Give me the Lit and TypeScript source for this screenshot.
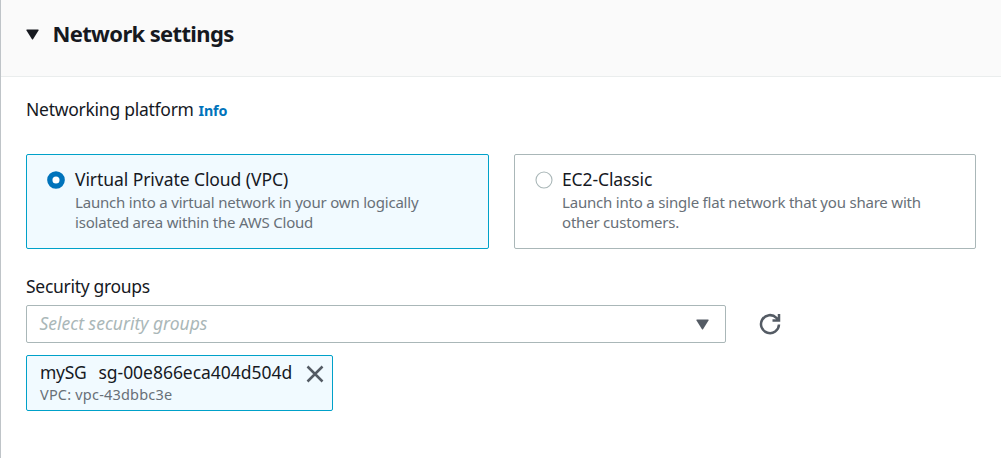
import { LitElement, html, css } from "lit";
import { customElement, property, state } from "lit/decorators.js";
import { classMap } from "lit/directives/class-map.js";

@customElement("platform-tile")
class PlatformTile extends LitElement {
  @property() heading = "";
  @property({ type: Array }) lines: string[] = [];
  @property({ type: Boolean }) selected = false;

  static styles = css`
    :host { display: block; }
    .tile {
      box-sizing: border-box;
      height: 95px;
      padding: 14px 20px;
      border: 1px solid #aab7b8;
      border-radius: 2px;
      background: #fff;
      display: flex;
      gap: 10px;
      cursor: pointer;
      white-space: nowrap;
    }
    .tile.selected { border-color: #00a1c9; background: #f1faff; }
    .tile:not(.selected) { padding-left: 19.5px; gap: 9.5px; }
    .radio { flex: none; width: 18px; height: 18px; margin-top: 1.5px; }
    .off { fill: #fff; stroke: #aab7b8; stroke-width: 1.1; }
    .ring { fill: #fff; stroke: #0073bb; stroke-width: 5.3; }
    .heading { font-size: 17.5px; line-height: 20px; color: #16191f; letter-spacing: -0.12px; }
    .selected .heading { letter-spacing: -0.07px; }
    .desc { margin-top: 3px; font-size: 15px; line-height: 20px; color: #687078; letter-spacing: -0.2px; }
  `;

  render() {
    return html`
      <div class=${classMap({ tile: true, selected: this.selected })}>
        <svg class="radio" viewBox="0 0 18 18">
          <circle class=${this.selected ? "ring" : "off"} cx="9" cy="9" r=${this.selected ? 6.2 : 8} />
        </svg>
        <div>
          <div class="heading">${this.heading}</div>
          <div class="desc">${this.lines.map((l) => html`<div>${l}</div>`)}</div>
        </div>
      </div>
    `;
  }
}

@customElement("app-root")
class AppRoot extends LitElement {
  @state() private platform = 0;

  static styles = css`
    :host {
      display: block;
      font-family: "Noto Sans", "Open Sans", sans-serif;
      color: #16191f;
    }
    .panel {
      box-sizing: border-box;
      height: 458px;
      border-left: 1px solid #bfc4c8;
      background: #fff;
      overflow: hidden;
      white-space: nowrap;
    }
    header {
      box-sizing: border-box;
      height: 77px;
      padding: 0 0 7px 25px;
      display: flex;
      align-items: center;
      gap: 14px;
      background: #fafafa;
      border-bottom: 1px solid #eaeded;
    }
    .caret { width: 13px; height: 11px; fill: #16191f; }
    header .caret { margin-left: -0.5px; }
    h2 { margin: 0 0 3px; font-size: 22px; line-height: 30px; font-weight: 700; letter-spacing: -0.65px; }
    .body { padding: 20px 25px 0; }
    .label { font-size: 17.5px; line-height: 24px; letter-spacing: -0.3px; }
    .name { letter-spacing: -0.26px; }
    .info {
      margin-left: 0.5px;
      font-size: 14.3px;
      font-weight: 700;
      color: #0073bb;
      letter-spacing: -0.1px;
    }
    .tiles { margin-top: 31px; display: grid; grid-template-columns: 463px 462px; gap: 25px; }
    .groups { margin-top: 25px; }
    .row { margin-top: 7px; display: flex; align-items: center; gap: 33px; }
    .select {
      box-sizing: border-box;
      width: 700px;
      height: 38px;
      padding: 0 16.5px 0 12.5px;
      border: 1px solid #aab7b8;
      border-radius: 2px;
      display: flex;
      align-items: center;
      justify-content: space-between;
    }
    .placeholder { margin-bottom: 2px; font-size: 17.5px; font-style: italic; color: #aab7b8; }
    .select .caret { fill: #545b64; }
    .refresh { width: 22px; height: 22px; }
    .token {
      box-sizing: border-box;
      width: 307px;
      height: 56px;
      margin-top: 12px;
      padding: 7px 8px 0 13px;
      border: 1px solid #00a1c9;
      border-radius: 2px;
      background: #f1faff;
      display: flex;
      justify-content: space-between;
    }
    .token-title { display: flex; gap: 12px; font-size: 17.5px; line-height: 20px; margin-top: -1px; }
    .tag { letter-spacing: -0.3px; }
    .gid { letter-spacing: -0.03px; }
    .token-sub { margin-top: 2px; font-size: 14.5px; line-height: 20px; color: #687078; letter-spacing: 0.2px; }
    .close { width: 18px; height: 18px; margin-top: 2px; }
    .stroke { fill: none; stroke: #545b64; stroke-width: 2.5; }
  `;

  private caret() {
    return html`<svg class="caret" viewBox="0 0 13 11">
      <path d="M1 .5h11q1 0 .5 1L7.2 10q-.7 1-1.4 0L.5 1.5Q0 .5 1 .5z" />
    </svg>`;
  }

  render() {
    const tiles = [
      { heading: "Virtual Private Cloud (VPC)", lines: ["Launch into a virtual network in your own logically", "isolated area within the AWS Cloud"] },
      { heading: "EC2-Classic", lines: ["Launch into a single flat network that you share with", "other customers."] },
    ];
    return html`
      <section class="panel">
        <header>${this.caret()}<h2>Network settings</h2></header>
        <div class="body">
          <div class="label"><span class="name">Networking platform</span> <span class="info">Info</span></div>
          <div class="tiles">
            ${tiles.map(
              (t, i) => html`<platform-tile
                .heading=${t.heading}
                .lines=${t.lines}
                .selected=${this.platform === i}
                @click=${() => (this.platform = i)}
              ></platform-tile>`
            )}
          </div>
          <div class="label groups">Security groups</div>
          <div class="row">
            <div class="select"><span class="placeholder">Select security groups</span>${this.caret()}</div>
            <svg class="refresh" viewBox="0 0 22 22">
              <path class="stroke" d="M20 11.5A9 9 0 1 1 17.4 4.800L19.5 7M20 1V7.500H13.500" />
            </svg>
          </div>
          <div class="token">
            <div>
              <div class="token-title"><span class="tag">mySG</span><span class="gid">sg-00e866eca404d504d</span></div>
              <div class="token-sub">VPC: vpc-43dbbc3e</div>
            </div>
            <svg class="close" viewBox="0 0 18 18"><path class="stroke" d="M1.5 1.5l15 15M16.5 1.5l-15 15" /></svg>
          </div>
        </div>
      </section>
    `;
  }
}
